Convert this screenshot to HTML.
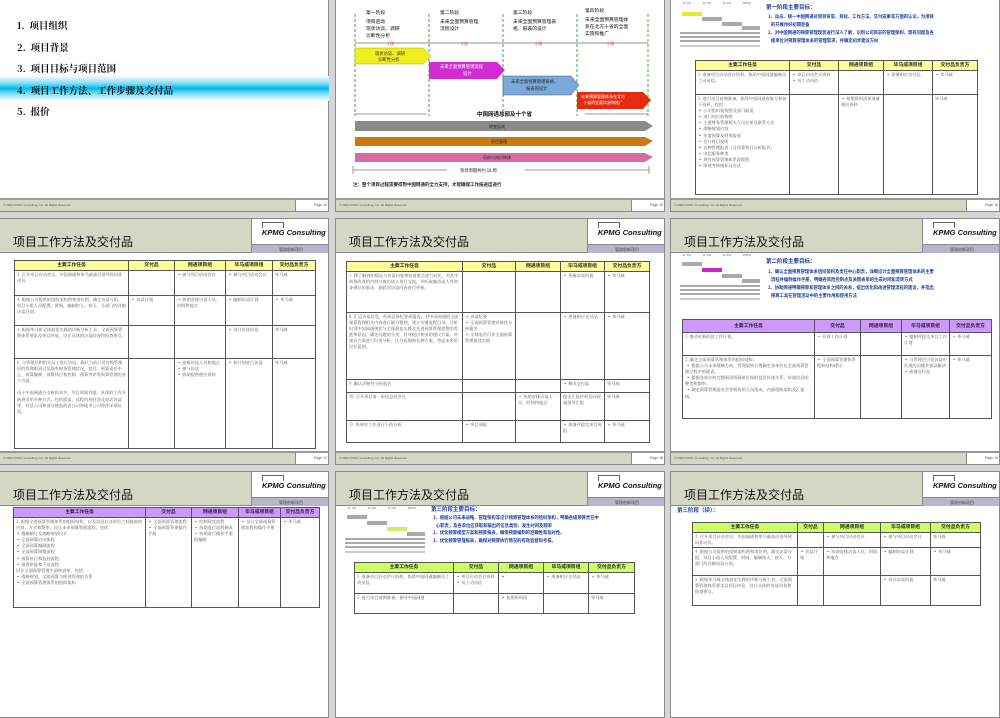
<!DOCTYPE html>
<html><head><meta charset="utf-8">
<style>
*{margin:0;padding:0;box-sizing:border-box}
body{width:1000px;height:600px;overflow:hidden;background:#d6d6d6;position:relative;font-family:"Liberation Sans","Noto Sans CJK SC",sans-serif}
.a{position:absolute}
.s{position:absolute;width:330px;height:247px;background:#fff;border:1px solid #8a8a8a;overflow:hidden}
.hd{position:absolute;left:0;top:0;width:252px;height:34px;background:#d3d7c3;border-bottom:1px solid #8a8a8a;border-right:1px solid #8a8a8a}
.hd span{position:absolute;left:13px;top:14px;font-size:12px;color:#111;font-family:"Noto Sans CJK SC",sans-serif}
.lg{position:absolute;left:252px;top:0;width:78px;height:34px;border-bottom:1px solid #8a8a8a}
.lg b{position:absolute;left:10px;top:9px;font-size:7.5px;font-style:italic;color:#111;white-space:nowrap}
.lg i{position:absolute;left:10px;top:3px;width:22px;height:6px;border:1px solid #666;border-bottom:none}
.lg u{position:absolute;left:0;top:25px;width:78px;height:9px;background:#b9b6cb;font-size:4px;text-decoration:none;text-align:center;line-height:9px;color:#444;border-top:1px solid #888}
.ft{position:absolute;left:0;bottom:0;width:330px;height:13px;background:#d3d7c3;border-top:2px solid #999}
.ft span{position:absolute;left:3px;top:3px;font-size:3px;color:#555;white-space:nowrap}
.ft em{position:absolute;right:0;top:0;width:35px;height:11px;background:#fff;border-left:1px solid #888;font-size:3.5px;font-style:normal;text-align:right;padding:3px 3px 0 0;color:#555}
table{position:absolute;border-collapse:collapse;table-layout:fixed;font-family:"Noto Serif CJK SC",serif;font-size:4.2px;color:#555;line-height:1.45}
td{border:1px solid #555;vertical-align:top;padding:1px 2px;overflow:hidden}
th{border:1px solid #555;font-family:"Noto Sans CJK SC",sans-serif;font-size:4.8px;color:#222;font-weight:bold;height:10px}
.y th{background:#ffff99}.p th{background:#cc99ff}.g th{background:#ccff66}
.bl{color:#1a3a9a;font-weight:bold;font-family:"Noto Sans CJK SC",sans-serif;white-space:nowrap}
</style></head><body>

<div class="s" style="left:-1px;top:-35px"><div class="ft"><span>© 2002 KPMG Consulting, Inc. All Rights Reserved</span><em>Page 14</em></div></div>
<div class="s" style="left:335px;top:-35px"><div class="ft"><span>© 2002 KPMG Consulting, Inc. All Rights Reserved</span><em>Page 15</em></div></div>
<div class="s" style="left:670px;top:-35px"><div class="ft"><span>© 2002 KPMG Consulting, Inc. All Rights Reserved</span><em>Page 16</em></div></div>

<div class="s" style="left:-1px;top:218px"><div class="hd"><span>项目工作方法及交付品</span></div><div class="lg"><i></i><b>KPMG Consulting</b><u>管理创新项目</u></div><div class="ft"><span>© 2002 KPMG Consulting, Inc. All Rights Reserved</span><em>Page 17</em></div></div>
<div class="s" style="left:335px;top:218px"><div class="hd"><span>项目工作方法及交付品</span></div><div class="lg"><i></i><b>KPMG Consulting</b><u>管理创新项目</u></div><div class="ft"><span>© 2002 KPMG Consulting, Inc. All Rights Reserved</span><em>Page 18</em></div></div>
<div class="s" style="left:670px;top:218px"><div class="hd"><span>项目工作方法及交付品</span></div><div class="lg"><i></i><b>KPMG Consulting</b><u>管理创新项目</u></div><div class="ft"><span>© 2002 KPMG Consulting, Inc. All Rights Reserved</span><em>Page 19</em></div></div>

<div class="s" style="left:-1px;top:471px"><div class="hd"><span>项目工作方法及交付品</span></div><div class="lg"><i></i><b>KPMG Consulting</b><u>管理创新项目</u></div></div>
<div class="s" style="left:335px;top:471px"><div class="hd"><span>项目工作方法及交付品</span></div><div class="lg"><i></i><b>KPMG Consulting</b><u>管理创新项目</u></div></div>
<div class="s" style="left:670px;top:471px"><div class="hd"><span>项目工作方法及交付品</span></div><div class="lg"><i></i><b>KPMG Consulting</b><u>管理创新项目</u></div></div>

<div class="a" style="left:0;top:76px;width:329px;height:25px;background:linear-gradient(#fff,#7fdcf5 30%,#00b8ec 50%,#7fdcf5 70%,#fff)"></div>
<div class="a" style="left:17px;top:15px;font-size:9.5px;line-height:21.6px;color:#111;font-family:'Noto Serif CJK SC',serif;font-weight:bold">
1.&nbsp;&nbsp;项目组织<br>2.&nbsp;&nbsp;项目背景<br>3.&nbsp;&nbsp;项目目标与项目范围<br>4.&nbsp;&nbsp;项目工作方法、工作步骤及交付品<br>5.&nbsp;&nbsp;报价</div>

<svg class="a" style="left:335px;top:0" width="330" height="200" font-family="Noto Sans CJK SC,sans-serif">
<g stroke="#3a3" stroke-width="1" stroke-dasharray="3,2"><line x1="20" y1="14" x2="20" y2="116"/><line x1="94" y1="14" x2="94" y2="116"/><line x1="168" y1="14" x2="168" y2="116"/><line x1="242" y1="14" x2="242" y2="116"/><line x1="313" y1="14" x2="313" y2="116"/></g>
<g font-size="4.8" fill="#111"><text x="31" y="14">第一阶段</text><text x="31" y="23">项目启动</text><text x="31" y="30">现状访谈、调研</text><text x="31" y="37">诊断性分析</text>
<text x="105" y="14">第二阶段</text><text x="105" y="23">未来全面预算管理</text><text x="105" y="30">流程设计</text>
<text x="178" y="14">第三阶段</text><text x="178" y="23">未来全面预算管理表</text><text x="178" y="30">格、报表的设计</text>
<text x="250" y="12">第四阶段</text><text x="250" y="21">未来全面预算管理体</text><text x="250" y="28">系在北方十省的全面</text><text x="250" y="35">实施和推广</text></g>
<g stroke="#222" stroke-width="0.6"><line x1="20" y1="43" x2="313" y2="43"/></g>
<g font-size="4" fill="#e33"><text x="52" y="45">3 周</text><text x="126" y="45">3 周</text><text x="200" y="45">3 周</text><text x="272" y="45">9 周</text></g>
<path d="M20 48H88L96 56L88 64H20Z" fill="#f0f020" stroke="#aa0" stroke-width=".5"/>
<text x="40" y="55" font-size="4.3" fill="#333">现状访谈、调研</text><text x="43" y="61" font-size="4.3" fill="#333">诊断性分析</text>
<path d="M94 62H162L170 70L162 79H94Z" fill="#d42ad4"/>
<text x="105" y="68" font-size="4.3" fill="#fff">未来全面预算管理流程</text><text x="128" y="75" font-size="4.3" fill="#fff">设计</text>
<path d="M168 76H236L244 85L236 95H168Z" fill="#7aaad8" stroke="#557" stroke-width=".5"/>
<text x="176" y="83" font-size="4.3" fill="#222">未来全面预算管理表格、</text><text x="191" y="90" font-size="4.3" fill="#222">报表的设计</text>
<path d="M242 92H308L316 100L308 109H242Z" fill="#e82a10"/>
<text x="246" y="98" font-size="4" fill="#fff">未来预算管理体系在北方</text><text x="248" y="104" font-size="4" fill="#fff">十省的全面实施和推广</text>
<line x1="20" y1="114" x2="92" y2="114" stroke="#333" stroke-width=".5"/><line x1="250" y1="114" x2="313" y2="114" stroke="#333" stroke-width=".5"/>
<text x="142" y="116" font-size="5.5" fill="#111" font-weight="bold">中国网通总部及十个省</text>
<path d="M20 121H310L318 126L310 131H20Z" fill="#8a8a8a"/><text x="154" y="128" font-size="4" fill="#222">转变促成</text>
<path d="M20 137H310L318 141L310 146H20Z" fill="#cc7a10"/><text x="156" y="143" font-size="4" fill="#222">项目管理</text>
<path d="M20 153H310L318 157L310 162H20Z" fill="#d86aa8"/><text x="148" y="159" font-size="4" fill="#222">培训与知识转移</text>
<line x1="18" y1="170" x2="112" y2="170" stroke="#333" stroke-width=".5"/><line x1="190" y1="170" x2="314" y2="170" stroke="#333" stroke-width=".5"/>
<line x1="18" y1="166" x2="18" y2="174" stroke="#333" stroke-width=".5"/><line x1="314" y1="166" x2="314" y2="174" stroke="#333" stroke-width=".5"/>
<text x="125" y="172" font-size="4.3" fill="#222">项目周期共约 18 周</text>
<text x="18" y="186" font-size="4.5" fill="#222" font-weight="bold">注：整个项目过程需要得到中国网通的全力支持，才能确保工作按进度进行</text>
</svg>

<svg class="a" style="left:678px;top:0" width="84" height="50"><g fill="#aaa"><rect x="4" y="12" width="20" height="4" fill="#e8e830"/><rect x="24" y="17" width="20" height="4"/><rect x="44" y="22" width="20" height="4"/><rect x="64" y="26" width="18" height="4"/><rect x="2" y="32" width="80" height="2"/><rect x="2" y="36" width="80" height="2"/><rect x="2" y="40" width="80" height="2"/></g><line x1="2" y1="46" x2="82" y2="46" stroke="#333" stroke-width=".5"/><g fill="#666" font-size="2"><text x="5" y="4">第一阶段</text><text x="25" y="4">第二阶段</text><text x="45" y="4">第三阶段</text><text x="65" y="4">第四阶段</text></g></svg>
<svg class="a" style="left:678px;top:252px" width="84" height="50"><g fill="#aaa"><rect x="4" y="10" width="20" height="4"/><rect x="24" y="16" width="20" height="4" fill="#cc22cc"/><rect x="44" y="22" width="20" height="4"/><rect x="64" y="27" width="18" height="4"/><rect x="2" y="33" width="80" height="2"/><rect x="2" y="37" width="80" height="2"/><rect x="2" y="41" width="80" height="2"/></g><line x1="2" y1="47" x2="82" y2="47" stroke="#333" stroke-width=".5"/><g fill="#666" font-size="2"><text x="5" y="4">第一阶段</text><text x="25" y="4">第二阶段</text><text x="45" y="4">第三阶段</text><text x="65" y="4">第四阶段</text></g></svg>
<svg class="a" style="left:343px;top:505px" width="84" height="50"><g fill="#aaa"><rect x="4" y="10" width="20" height="4"/><rect x="24" y="16" width="20" height="4"/><rect x="44" y="22" width="20" height="4" fill="#ccf060"/><rect x="64" y="27" width="18" height="4"/><rect x="2" y="33" width="80" height="2"/><rect x="2" y="37" width="80" height="2"/><rect x="2" y="41" width="80" height="2"/></g><line x1="2" y1="47" x2="82" y2="47" stroke="#333" stroke-width=".5"/><g fill="#666" font-size="2"><text x="5" y="4">第一阶段</text><text x="25" y="4">第二阶段</text><text x="45" y="4">第三阶段</text><text x="65" y="4">第四阶段</text></g></svg>

<div class="a bl" style="left:766px;top:3px;font-size:5.5px">第一阶段主要目标：</div>
<div class="a bl" style="left:768px;top:13px;font-size:4.3px;line-height:8px">1、动员、统一中国网通对项目背景、目标、工作方法、交付成果等方面的认识，为项目<br>&nbsp;&nbsp;&nbsp;的开展作好初期准备<br>2、对中国网通的预算管理现状进行深入了解，识别公司目前的管理架构、现有问题及各<br>&nbsp;&nbsp;&nbsp;级单位对预算管理体系的管理需求，并确定初步建议方向</div>
<table class="y" style="left:695px;top:60px;width:282px">
<col style="width:94px"><col style="width:49px"><col style="width:45px"><col style="width:49px"><col style="width:45px">
<tr><th>主要工作任务</th><th>交付品</th><th>网通项目组</th><th>毕马威项目组</th><th>交付品负责方</th></tr>
<tr style="height:24px"><td>1. 准备项目启动会议资料，协助中国网通编制员工动员信。</td><td>▪ 项目启动会议资料<br>▪ 员工动员信</td><td></td><td>▪ 准备相应交付品</td><td>▪ 毕马威</td></tr>
<tr style="height:100px"><td>2. 进行项目前期准备，指导中国网通收集分析如下资料，包括：<br>▪ 公司组织架构图及部门职责<br>▪ 部门岗位结构图<br>▪ 主要财务管理相关人员名单及联系方式<br>▪ 战略规划内容<br>▪ 年度预算及财务报表<br>▪ 会计科目说明<br>▪ 各种管理报表（含预算执行分析报告）<br>▪ 电信服务种类<br>▪ 现有预算管理体系流程图<br>▪ 绩效考核指标及办法</td><td></td><td>▪ 按照资料清单准备相应资料</td><td></td><td>毕马威</td></tr>
</table>

<table class="y" style="left:14px;top:260px;width:301px">
<col style="width:114px"><col style="width:46px"><col style="width:51px"><col style="width:47px"><col style="width:43px">
<tr><th>主要工作任务</th><th>交付品</th><th>网通项目组</th><th>毕马威项目组</th><th>交付品负责方</th></tr>
<tr style="height:25px"><td>3. 召开项目启动会议，中国网通和毕马威高层领导致词作动员。</td><td></td><td>▪ 参与项目启动会议</td><td>▪ 参与项目启动会议</td><td>毕马威</td></tr>
<tr style="height:30px"><td>4. 根据公司提供的组织架构图和岗位图，确定访谈分组、项目小组人员配置、时间，编制按人、按天、分部门的详细访谈计划。</td><td>▪ 访谈计划</td><td>▪ 协助安排访谈人员、时间和地点</td><td>▪ 编制访谈计划</td><td>▪ 毕马威</td></tr>
<tr style="height:33px"><td>5. 根据毕马威全球最佳实践的诊断分析工具、全面预算管理体系要求及项目经验，设计具体的访谈问卷和检查要点。</td><td></td><td></td><td>▪ 设计访谈问卷</td><td>毕马威</td></tr>
<tr style="height:90px"><td>6. 与管理层和相关员工进行访谈，确认当前公司各级管理层的管理职责以及现有财务管理状况，包括：预算责任中心、预算编制、预算执行和控制、预算考评等预算管理的各个方面。<br><br>由于中国网通分支机构众多，项目时间有限，具体的工作开展将采用多种方式，包括面谈、远程问卷回答及电话访谈等。对总公司和部分挑选的省公司和地市公司将作详细访谈。</td><td></td><td>▪ 安排访谈人员和地点<br>▪ 参与访谈<br>▪ 协助提供相应资料</td><td>▪ 按计划进行访谈</td><td>毕马威</td></tr>
</table>

<table class="y" style="left:346px;top:261px;width:303px">
<col style="width:116px"><col style="width:53px"><col style="width:45px"><col style="width:44px"><col style="width:45px">
<tr><th>主要工作任务</th><th>交付品</th><th>网通项目组</th><th>毕马威项目组</th><th>交付品负责方</th></tr>
<tr style="height:41px"><td>7. 将了解到的情况与访谈问卷和检查要点进行对比，对其中尚待改进的内容与被访谈人进行交流，并听取被访谈人对初步建议的看法，据此对访谈问卷进行更新。</td><td></td><td></td><td>▪ 更新访谈问卷</td><td>▪ 毕马威</td></tr>
<tr style="height:67px"><td>8. 汇总访谈信息，形成总体纪要或报告。对中国网通的全面预算管理相关内容进行细分整理，建立关键流程目录。分析识别中国网通现状与全球最佳实践及先进预算管理思想的差距和原因，确定问题的分类，针对提出初步的建议方案。对建议方案进行归类分析，区分短期和长期方案，考虑未来的设计蓝图。</td><td>▪ 访谈纪要<br>▪ 全面预算管理诊断性分析报告<br>▪ 全球电信行业全面预算管理最佳实践</td><td></td><td>▪ 准备相应交付品</td><td>▪ 毕马威</td></tr>
<tr style="height:13px"><td>9. 确认诊断性分析报告</td><td></td><td></td><td>▪ 修改交付品</td><td>毕马威</td></tr>
<tr style="height:28px"><td>10. 召开项目第一阶段总结会议</td><td></td><td>▪ 协助安排访谈人员、时间和地点</td><td>提交汇报材料及向网通领导汇报</td><td>毕马威</td></tr>
<tr style="height:22px"><td>11. 每周对工作进行小结分析。</td><td>▪ 项目周报</td><td></td><td>▪ 准备并提交项目周报</td><td>▪ 毕马威</td></tr>
</table>

<div class="a bl" style="left:766px;top:257px;font-size:5.5px">第二阶段主要目标：</div>
<div class="a bl" style="left:768px;top:268px;font-size:4.3px;line-height:8px">1、确认全面预算管理体系组织架构及责任中心职责，详细设计全面预算管理体系的主要<br>&nbsp;&nbsp;&nbsp;流程并编制操作手册，明确各风险控制点及关键表单的生成时间和流转方式<br>2、协助网通明确预算和管理体系之间的关系，提出优化和改进管理流程的建议，并指出<br>&nbsp;&nbsp;&nbsp;预算工具在管理活动中的主要作用和使用方法</div>
<table class="p" style="left:682px;top:319px;width:309px">
<col style="width:132px"><col style="width:46px"><col style="width:41px"><col style="width:48px"><col style="width:42px">
<tr><th style="height:13px">主要工作任务</th><th>交付品</th><th>网通项目组</th><th>毕马威项目组</th><th>交付品负责方</th></tr>
<tr style="height:23px"><td>1. 滚动更新阶段工作计划。</td><td>▪ 双周工作计划</td><td></td><td>▪ 编制并提交项目工作计划</td><td>▪ 毕马威</td></tr>
<tr style="height:63px"><td>2. 确定全面预算管理体系的组织结构。<br>&nbsp;▪ 根据公司未来战略方向、管理架构合理确定各单位在全面预算管理过程中的职责。<br>&nbsp;▪ 根据各单位的完整职责明确单位间的信息传递关系、传递信息的种类和频率。<br>&nbsp;▪ 确定预算管理委员会等机构的人员组成，内部组织架构及汇报线。</td><td>▪ 全面预算管理体系组织结构建议</td><td></td><td>▪ 与管理层讨论访谈中发现的问题并加以解决<br>▪ 准备交付品</td><td>▪ 毕马威</td></tr>
</table>

<table class="p" style="left:13px;top:507px;width:306px">
<col style="width:132px"><col style="width:46px"><col style="width:47px"><col style="width:42px"><col style="width:39px">
<tr><th style="height:9px">主要工作任务</th><th>交付品</th><th>网通项目组</th><th>毕马威项目组</th><th>交付品负责方</th></tr>
<tr style="height:90px"><td>3. 根据全面预算管理体系的组织结构，以及信息在各单位之间流转的内容、方式和频率，设计未来预算管理流程，包括：<br>▪ 战略制订及战略规划设计<br>▪ 全面预算启动流程<br>▪ 全面预算编制流程<br>▪ 全面预算调整流程<br>▪ 预算执行和监控流程<br>▪ 预算审批和下达流程<br>设计全面预算管理手册和表单，包括：<br>▪ 战略规划、全面预算与绩效管理的关系<br>▪ 全面预算管理体系的组织架构</td><td>▪ 全面预算管理流程<br>▪ 全面预算管理操作手册</td><td>▪ 绘制现状流程<br>▪ 协助进行流程修改<br>▪ 协助进行操作手册的编制</td><td>▪ 设计全面预算管理流程和操作手册</td><td>▪ 毕马威</td></tr>
</table>

<div class="a bl" style="left:431px;top:505px;font-size:5.5px">第三阶段主要目标：</div>
<div class="a bl" style="left:433px;top:515px;font-size:4.3px;line-height:7.5px">1、根据公司未来战略、管理架构等设计预算管理体系的组织架构，明确各级预算责任中<br>&nbsp;&nbsp;&nbsp;心职责，及各单位应获取和输出的信息类别、发生时间及频率<br>2、优化预算模型方案和预算报表，确保预算编制的准确性和及时性。<br>3、优化预算管理报表，确保对预算执行情况的有效监督和考核。</div>
<table class="g" style="left:354px;top:562px;width:280px">
<col style="width:99px"><col style="width:45px"><col style="width:45px"><col style="width:45px"><col style="width:46px">
<tr><th style="height:9px">主要工作任务</th><th>交付品</th><th>网通项目组</th><th>毕马威项目组</th><th>交付品负责方</th></tr>
<tr style="height:21px"><td>1. 准备项目启动会议资料，协助中国网通编制员工动员信。</td><td>▪ 项目启动会议资料<br>▪ 员工动员信</td><td>▪</td><td>▪ 准备相应交付品</td><td>▪ 毕马威</td></tr>
<tr style="height:20px"><td>2. 进行项目前期准备，指导中国网通</td><td></td><td>▪ 按照资料清</td><td></td><td>毕马威</td></tr>
</table>

<div class="a bl" style="left:677px;top:506px;font-size:5.5px">第三阶段（续）：</div>
<table class="g" style="left:692px;top:522px;width:288px">
<col style="width:105px"><col style="width:26px"><col style="width:57px"><col style="width:50px"><col style="width:50px">
<tr><th>主要工作任务</th><th>交付品</th><th>网通项目组</th><th>毕马威项目组</th><th>交付品负责方</th></tr>
<tr style="height:15px"><td>3. 召开项目启动会议，中国网通和毕马威高层领导致词作动员。</td><td></td><td>▪ 参与项目启动会议</td><td>▪ 参与项目启动会议</td><td>毕马威</td></tr>
<tr style="height:28px"><td>4. 根据公司提供的组织架构图和岗位图，确定访谈分组、项目小组人员配置、时间、编制按人、按天、分部门的详细访谈计划。</td><td>▪ 访谈计划</td><td>▪ 协助安排访谈人员、时间和地点</td><td>▪ 编制访谈计划</td><td>▪ 毕马威</td></tr>
<tr style="height:30px"><td>5. 根据毕马威全球最佳实践的诊断分析工具、全面预算管理体系要求及项目经验，设计具体的访谈问卷和检查要点。</td><td></td><td></td><td>▪ 设计访谈问卷</td><td>毕马威</td></tr>
</table>
</body></html>
